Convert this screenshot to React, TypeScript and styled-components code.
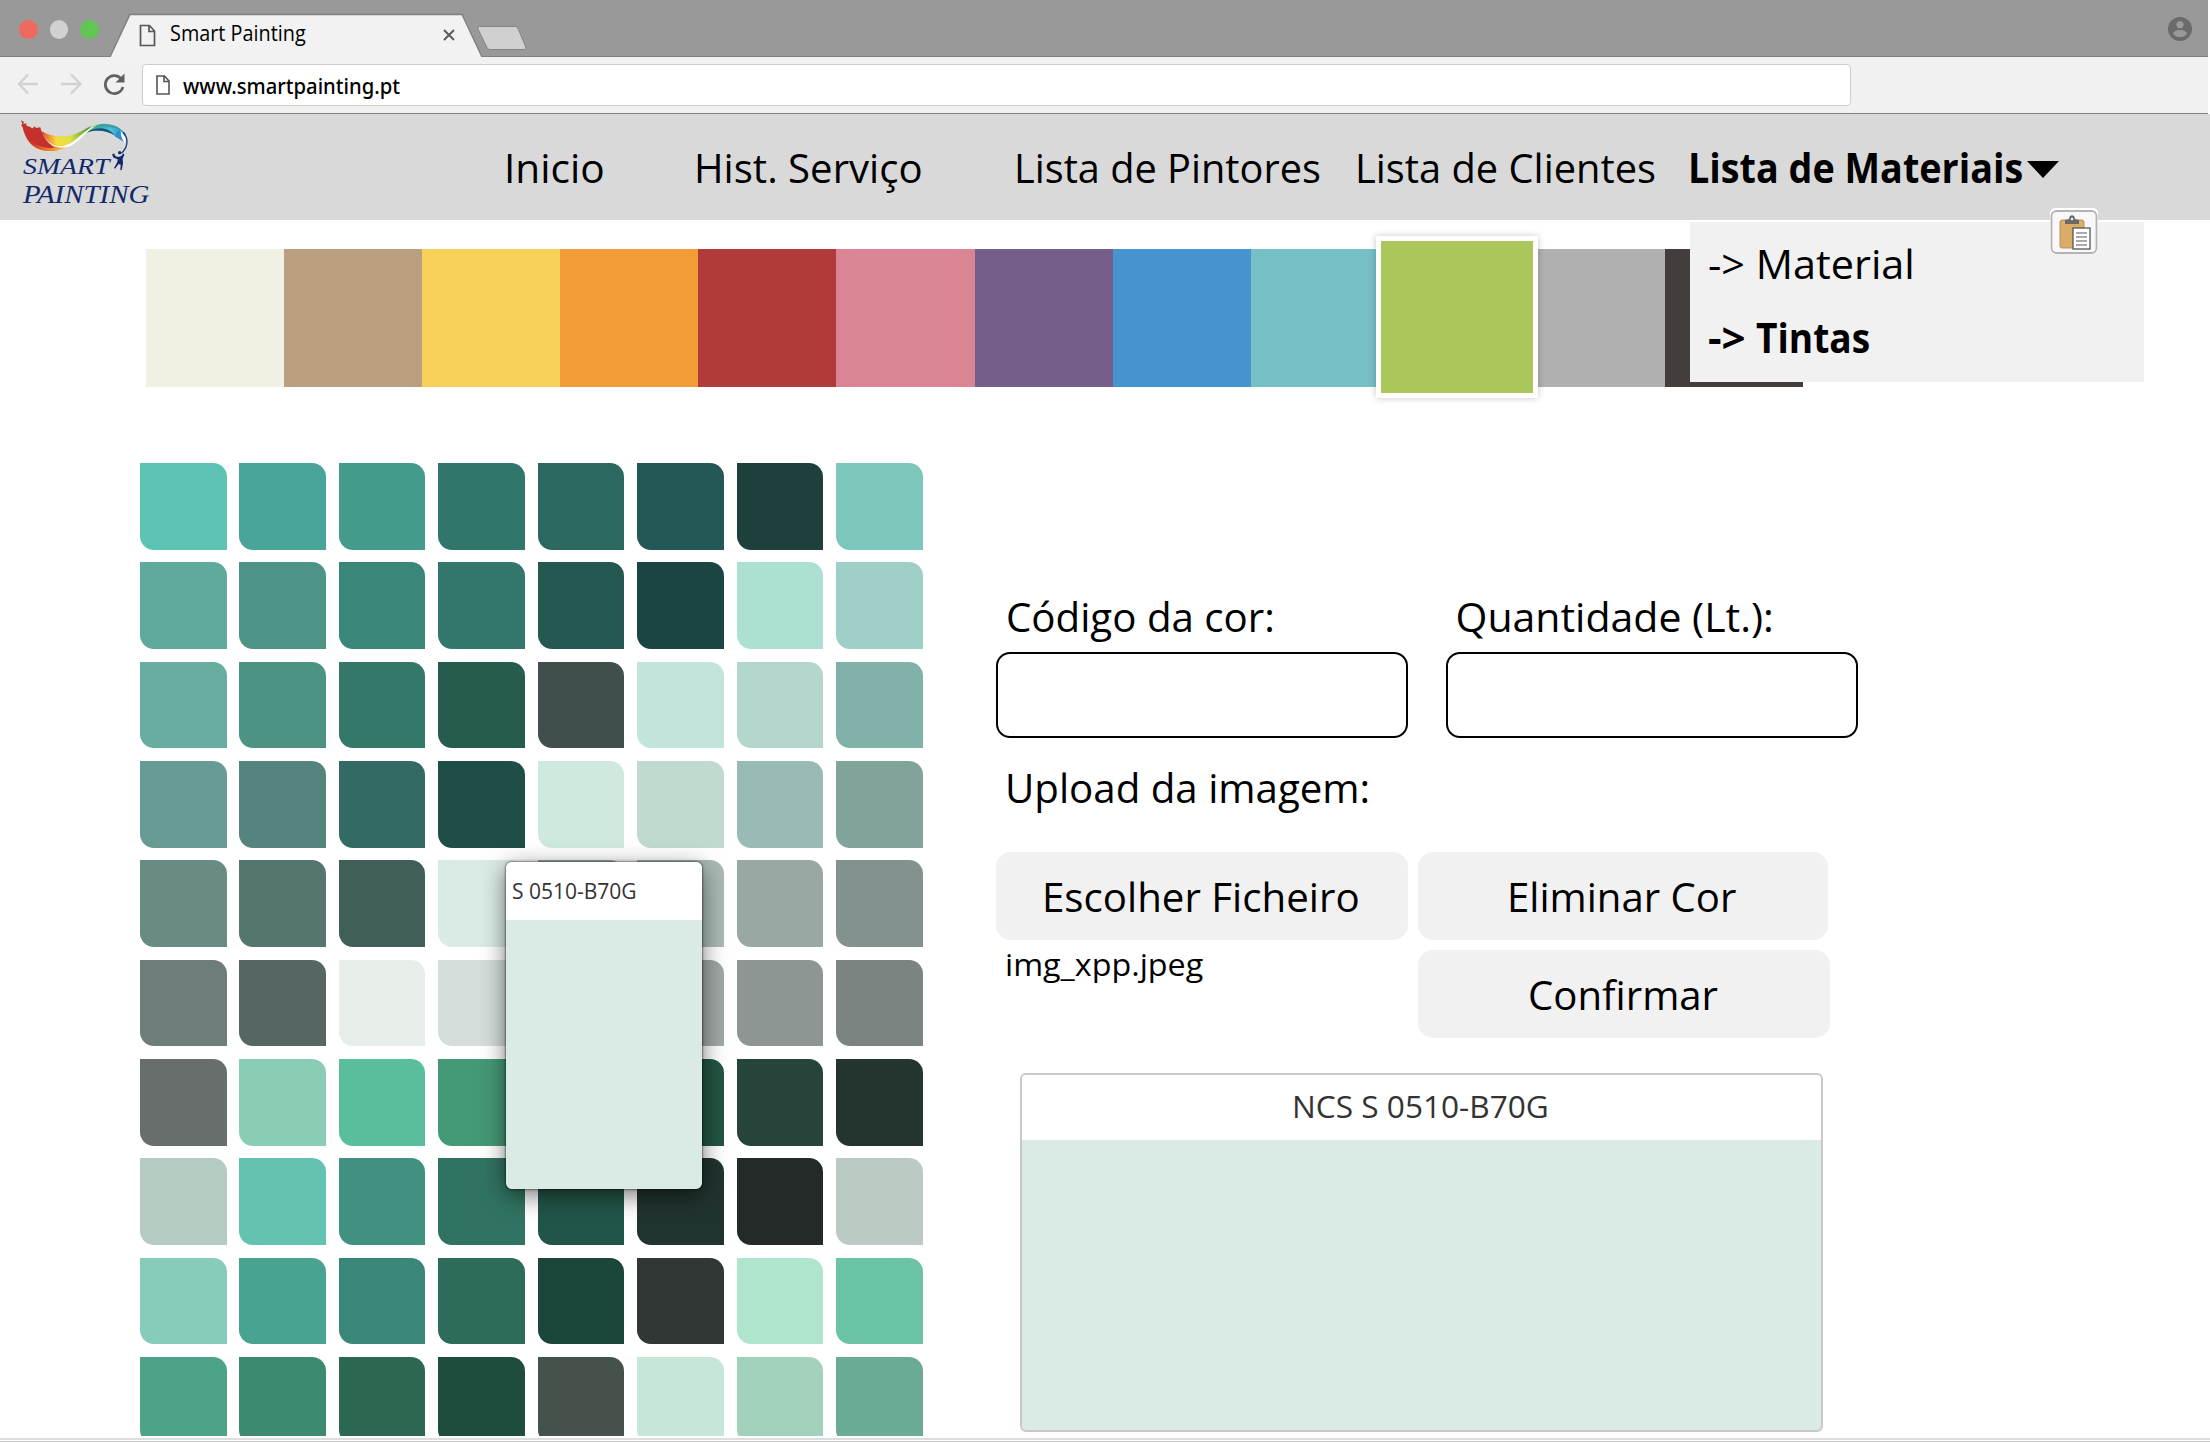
import React, { useLayoutEffect, useRef, useState } from 'react';
import styled, { createGlobalStyle } from 'styled-components';

const Global = createGlobalStyle`
  *, *::before, *::after { box-sizing: border-box; }
  html, body { margin: 0; padding: 0; background: #fff; }
  body { width: 2210px; height: 1442px; overflow: hidden; font-family: 'Open Sans', 'Noto Sans', sans-serif; color: #000; }
`;

const sans = "'Open Sans', 'Noto Sans', sans-serif";

/* Text set to an exact measure: glyphs are condensed to fill the given width. */
const FitBox = styled.span<{ $w: number; $size: number; $lh: number; $weight?: number; $family?: string; $color?: string; $italic?: boolean }>`
  display: block;
  flex: none;
  width: ${p => p.$w}px;
  height: ${p => p.$lh}px;
  line-height: ${p => p.$lh}px;
  font-size: ${p => p.$size}px;
  font-weight: ${p => p.$weight ?? 400};
  font-family: ${p => p.$family ?? sans};
  font-style: ${p => (p.$italic ? 'italic' : 'normal')};
  color: ${p => p.$color ?? '#000'};
  white-space: nowrap;
`;
const FitInner = styled.span`
  display: inline-block;
  transform-origin: 0 50%;
`;

type FitProps = { w: number; size: number; lh: number; weight?: number; family?: string; color?: string; italic?: boolean; children: string };

function Fit({ w, size, lh, weight, family, color, italic, children }: FitProps) {
  const ref = useRef<HTMLSpanElement>(null);
  const [scale, setScale] = useState(1);
  useLayoutEffect(() => {
    if (ref.current && ref.current.offsetWidth) setScale(w / ref.current.offsetWidth);
  }, [w, children]);
  return (
    <FitBox $w={w} $size={size} $lh={lh} $weight={weight} $family={family} $color={color} $italic={italic}>
      <FitInner ref={ref} style={{ transform: `scaleX(${scale})` }}>{children}</FitInner>
    </FitBox>
  );
}

const Page = styled.div`
  display: flex;
  flex-direction: column;
  width: 2210px;
  height: 1442px;
  background: #fff;
  overflow: hidden;
`;

/* ---------- browser chrome ---------- */
const TitleBar = styled.div`
  display: flex;
  align-items: flex-start;
  width: 2208px;
  height: 57px;
  background: #999;
  box-shadow: inset 0 -1px #7f7f7f;
`;
const Lights = styled.div`
  display: flex;
  gap: 12px;
  padding: 20px 0 0 19px;
  width: 110px;
`;
const Light = styled.i<{ $c: string }>`
  width: 18.5px;
  height: 18.5px;
  border-radius: 50%;
  background: ${p => p.$c};
`;
const Tab = styled.div`
  position: relative;
  width: 373px;
  height: 57px;
  display: flex;
  align-items: flex-start;
  padding-left: 29px;
`;
const TabShape = styled.svg`
  position: absolute;
  left: 0;
  top: 0;
`;
const TabDoc = styled.svg`
  position: relative;
  margin-top: 24px;
`;
const TabTitle = styled.div`
  position: relative;
  margin: 18px 0 0 14px;
  width: 273px;
`;
const TabClose = styled.svg`
  position: relative;
  margin-top: 29px;
`;
const NewTab = styled.svg`
  margin: 24px 0 0 -7px;
`;
const Person = styled.svg`
  margin: 17px 16px 0 auto;
`;
const ToolBar = styled.div`
  display: flex;
  align-items: center;
  width: 2208px;
  height: 57px;
  padding-left: 16px;
  background: #f1f1f1;
  border-bottom: 1px solid #808080;
`;
const NavIcons = styled.svg`
  flex: none;
`;
const UrlBar = styled.div`
  display: flex;
  align-items: center;
  width: 1709px;
  height: 42px;
  margin: -1px 0 0 14px;
  padding-left: 13px;
  gap: 13px;
  background: #fff;
  border: 1.5px solid #cdcdcd;
  border-radius: 4px;
`;

/* ---------- site header ---------- */
const Header = styled.header`
  position: relative;
  display: flex;
  align-items: flex-start;
  height: 106px;
  background: #d9d9d9;
`;
const Brand = styled.div`
  width: 504px;
  height: 106px;
  padding: 4px 0 0 18px;
`;
const BrandArt = styled.svg`
  display: block;
  height: 62px;
  margin-bottom: -27px;
`;
const BrandText = styled.div`
  padding-left: 5px;
  display: flex;
  flex-direction: column;
`;
const Nav = styled.nav`
  display: flex;
  align-items: center;
  padding-top: 24.5px;
`;
const NavItem = styled.a<{ $gap: number }>`
  margin-right: ${p => p.$gap}px;
`;
const Caret = styled.i`
  margin-top: 6px;
  border: 16px solid transparent;
  border-top: 17px solid #000;
  border-bottom: 0;
`;
const Menu = styled.div`
  position: absolute;
  z-index: 5;
  left: 1690px;
  top: 108px;
  width: 454px;
  height: 160px;
  padding: 12.5px 0 0 18px;
  background: #f1f1f1;
  display: flex;
  flex-direction: column;
  gap: 18px;
`;
const MenuItem = styled.a`
  display: flex;
  gap: 10px;
`;
const PasteBadge = styled.svg`
  position: absolute;
  z-index: 6;
  left: 2049px;
  top: 94px;
`;

/* ---------- colour families ---------- */
const Strip = styled.div`
  display: flex;
  flex: none;
  margin: 29px 0 0 146px;
  width: 1657px;
  height: 138px;
`;
const Family = styled.div<{ $c: string; $on?: boolean }>`
  flex: 1 1 0;
  min-width: 0;
  background: ${p => p.$c};
  ${p => p.$on && `
    z-index: 1;
    margin: -13px -11px -11px -13px;
    flex: 0 0 162px;
    border: 5px solid #fff;
    box-shadow: 0 0 7px rgba(0,0,0,.22);
  `}
`;

/* ---------- body ---------- */
const Body = styled.main`
  display: flex;
  flex: none;
  align-items: flex-start;
  padding: 76px 0 0 140px;
  height: 1051px;
`;
const Palette = styled.div`
  position: relative;
  flex: none;
  width: 783px;
  height: 973px;
`;
const Swatches = styled.div`
  display: grid;
  grid-template-columns: repeat(8, 86.5px);
  grid-auto-rows: 86.5px;
  gap: 12.85px 12.95px;
  height: 973px;
  overflow: hidden;
`;
const Swatch = styled.div<{ $c: string }>`
  background: ${p => p.$c};
  border-radius: 0 14px 0 14px;
`;
const Popup = styled.div`
  position: absolute;
  left: 366px;
  top: 399px;
  width: 196px;
  height: 327px;
  border-radius: 6px;
  overflow: hidden;
  background: #daebe5;
  box-shadow: 0 0 2px 1px rgba(0,0,0,.4);
`;
const PopupShade = styled.div`
  position: absolute;
  left: 366px;
  top: 399px;
  width: 196px;
  height: 327px;
  border-radius: 6px;
  box-shadow: 0 6px 24px rgba(0,0,0,.55);
`;
const PopupHead = styled.div`
  height: 58px;
  padding: 14px 0 0 6px;
  background: #fff;
`;

const Form = styled.section`
  display: flex;
  flex-direction: column;
  margin: 119px 0 0 73px;
  width: 862px;
`;
const Fields = styled.div`
  display: flex;
  gap: 38px;
`;
const Field = styled.label`
  display: flex;
  flex-direction: column;
  width: 412px;
`;
const Caption = styled.div`
  padding-left: 9.5px;
  height: 70px;
  padding-top: 6px;
`;
const Input = styled.input`
  width: 412px;
  height: 86px;
  border: 2px solid #000;
  border-radius: 14px;
  background: #fff;
  outline: none;
`;
const UploadCaption = styled.div`
  padding: 21px 0 0 9px;
  height: 114px;
`;
const Actions = styled.div`
  display: grid;
  grid-template-columns: 412px 412px;
  grid-template-rows: 88px 88px;
  gap: 10px;
`;
const Button = styled.button<{ $w: number }>`
  display: flex;
  justify-content: center;
  align-items: center;
  width: ${p => p.$w}px;
  height: 88px;
  padding: 0 3px 1px 0;
  border: 0;
  border-radius: 15px;
  background: #f1f1f1;
`;
const FileName = styled.div`
  padding-left: 9px;
  margin-top: -1.5px;
`;
const Card = styled.div`
  width: 803px;
  height: 359px;
  margin: 35px 0 0 24px;
  border: 2px solid #c8c8c8;
  border-radius: 6px;
  background: #daebe5;
  overflow: hidden;
`;
const CardHead = styled.div`
  display: flex;
  justify-content: center;
  height: 65px;
  padding: 9px 2px 0 0;
  background: #fff;
`;
const Foot = styled.div`
  flex: none;
  height: 4px;
  background: linear-gradient(#dedede 0 2px, #fff 2px 3px, #c4c4c4 3px 4px);
`;

const families = ['#f0f1e3', '#ba9f81', '#f8d15b', '#f29c38', '#b13a3a', '#da8593', '#755e8a', '#4693ce', '#76c0c5', '#abc65b', '#b0b0b0', '#433e3c'];

const shades = [
  '#5dc3b5', '#49a499', '#449a8b', '#31766a', '#2b685f', '#245856', '#1d403d', '#7dc6bc',
  '#5faa9d', '#4d9386', '#3a8679', '#33766c', '#255850', '#1b4542', '#abe0d3', '#9fd0c8',
  '#68ad9f', '#4c9384', '#337869', '#255c4e', '#404e4d', '#c1e5dc', '#b3d6cd', '#80b2aa',
  '#689b94', '#53857e', '#346a64', '#1f4e47', '#cee9dd', '#c0dad0', '#98bcb5', '#80a39c',
  '#688c84', '#55756f', '#405f59', '#daebe5', '#9fb0ac', '#abbab6', '#9aa8a4', '#83928e',
  '#6e7d79', '#566662', '#e7eeea', '#d5deda', '#b4bfbb', '#a0a8a5', '#8e9693', '#7c8482',
  '#686e6b', '#8bcdb4', '#5abe9c', '#449976', '#2f7a5a', '#235643', '#27443a', '#24342f',
  '#b4cbc2', '#64c3b0', '#40917f', '#317362', '#225549', '#213330', '#232a28', '#bbcbc4',
  '#87ccba', '#48a491', '#3a8678', '#2d6c5b', '#1c463b', '#303735', '#b0e5cd', '#6bc3a5',
  '#4da38a', '#3c8b71', '#2c6851', '#1e4d3d', '#45514b', '#c6e6d7', '#a2d2bb', '#69ab95',
];

const script = "'Z003', 'URW Chancery L', 'Liberation Serif', serif";

function Logo() {
  return (
    <Brand>
      <BrandArt width="116" height="62" viewBox="54 24 348 186">
        <defs>
          <linearGradient id="ribbon" x1="63" y1="0" x2="382" y2="0" gradientUnits="userSpaceOnUse">
            <stop offset="0" stopColor="#c4302b" />
            <stop offset=".12" stopColor="#cf3a28" />
            <stop offset=".24" stopColor="#ea7a2a" />
            <stop offset=".38" stopColor="#f2b535" />
            <stop offset=".5" stopColor="#d8d544" />
            <stop offset=".6" stopColor="#7fb843" />
            <stop offset=".72" stopColor="#3fae8c" />
            <stop offset=".84" stopColor="#4fbfd4" />
            <stop offset="1" stopColor="#2a86cc" />
          </linearGradient>
          <linearGradient id="inner" x1="130" y1="0" x2="265" y2="0" gradientUnits="userSpaceOnUse">
            <stop offset="0" stopColor="#e8622b" />
            <stop offset=".3" stopColor="#f6dd3f" />
            <stop offset=".6" stopColor="#dfe04a" />
            <stop offset="1" stopColor="#4f9c3c" />
          </linearGradient>
        </defs>
        <path d="M66 44C74 82 92 123 150 123C214 123 232 76 278 62C310 54 332 64 346 80C360 80 366 84 370 94L378 78C366 50 336 40 308 41C270 44 244 78 186 80C158 80 140 72 128 66z" fill="url(#ribbon)" />
        <path d="M128 66C150 78 172 81 196 79C232 75 250 58 274 48C250 72 226 106 184 107C158 107 140 92 128 66z" fill="url(#inner)" />
        <path d="M63 31L72 36L70 42L79 40L80 48L90 50L97 56L104 49L108 54L121 52L124 64L130 68C138 92 152 106 164 114C104 118 78 82 70 52L63 46L67 42z" fill="#c4302b" />
        <path d="M126 66C142 104 176 120 214 98C240 82 252 60 290 46C256 66 246 88 218 104C180 124 140 108 126 66z" fill="#fff" />
        <path d="M262 66C290 48 326 52 344 76C322 62 294 58 262 66z" fill="#12557f" />
        <path d="M300 42C330 40 356 48 370 66C348 52 326 50 300 50z" fill="#3d9fae" />
        <path d="M362 62L378 84L374 100C366 92 362 78 362 62z" fill="#fff" />
        <path d="M360 60C350 64 344 72 346 80L372 96C364 84 361 72 360 60z" fill="#2f8fd2" />
        <path d="M370 66C388 90 382 114 364 130" fill="none" stroke="#1b3f7c" strokeWidth="4" />
        <circle cx="359" cy="128" r="5" fill="#12296a" />
        <path d="M336 134L342 130L346 138L354 141L364 138L370 130L373 134L368 146L369 160L365 181L361 180L362 164L356 162L345 176L342 174L352 156L353 148L341 143z" fill="#12296a" />
      </BrandArt>
      <BrandText>
        <Fit w={87} size={23} lh={28} family={script} italic color="#12296a">SMART</Fit>
        <Fit w={126} size={25} lh={28} family={script} italic color="#12296a">PAINTING</Fit>
      </BrandText>
    </Brand>
  );
}

export default function App() {
  return (
    <Page>
      <Global />
      <TitleBar>
        <Lights>
          <Light $c="#ee6a5e" />
          <Light $c="#d1d1d1" />
          <Light $c="#61c654" />
        </Lights>
        <Tab>
          <TabShape width="373" height="57">
            <path d="M0 57L20 14.500H352L372 57" fill="#f2f2f2" stroke="#7f7f7f" strokeWidth="1.300" />
          </TabShape>
          <TabDoc width="17" height="23" fill="none" stroke="#565656" strokeWidth="1.700">
            <path d="M1.500 1.500h9l5 5.500v14.500h-14zM10 1.500v6h5.500" />
          </TabDoc>
          <TabTitle><Fit w={136} size={21} lh={31}>Smart Painting</Fit></TabTitle>
          <TabClose width="13" height="13" stroke="#5c5c5c" strokeWidth="2">
            <path d="M1 1l10 10M11 1L1 11" />
          </TabClose>
        </Tab>
        <NewTab width="52" height="28">
          <path d="M3.500 2.500H39q2 0 3 2l7.500 18q1 3-1 3H14q-2 0-3-2L2 5q-1-2.500 1.500-2.500z" fill="#d0d0d0" stroke="#848484" />
        </NewTab>
        <Person width="24" height="24" viewBox="0 0 24 24">
          <circle cx="12" cy="12" r="12" fill="#6b6b6b" />
          <circle cx="12" cy="7.600" r="3.600" fill="#999" />
          <path d="M5 16.200c2-4.400 12-4.400 14 0-2.500 5.200-11.500 5.200-14 0z" fill="#999" />
        </Person>
      </TitleBar>
      <ToolBar>
        <NavIcons width="112" height="30" fill="none" strokeWidth="2.400">
          <path d="M22 14H3.500M12 4.500L3 14l9 9.500M45 14h18.500M55 4.500l9.500 9.500-9.500 9.500" stroke="#d2d2d2" />
          <path d="M105 8.500a9 9 0 1 0 2 8.500" stroke="#606060" strokeWidth="2.700" />
          <path d="M108.500 3.500v9h-9z" fill="#606060" />
        </NavIcons>
        <UrlBar>
          <svg width="14" height="20" fill="none" stroke="#565656" strokeWidth="1.600"><path d="M1 1h7.500l4.500 5v13H1zM8 1v5.500h5" /></svg>
          <Fit w={217} size={22} lh={30} weight={500} family="'Noto Sans', sans-serif">www.smartpainting.pt</Fit>
        </UrlBar>
      </ToolBar>
      <Header>
        <Logo />
        <Nav>
          <NavItem $gap={89}><Fit w={101} size={41} lh={56}>Inicio</Fit></NavItem>
          <NavItem $gap={91}><Fit w={229} size={41} lh={56}>Hist. Serviço</Fit></NavItem>
          <NavItem $gap={34}><Fit w={307} size={41} lh={56}>Lista de Pintores</Fit></NavItem>
          <NavItem $gap={32}><Fit w={301} size={41} lh={56}>Lista de Clientes</Fit></NavItem>
          <NavItem $gap={4}><Fit w={335} size={41} lh={56} weight={700}>Lista de Materiais</Fit></NavItem>
          <Caret />
        </Nav>
        <Menu>
          <MenuItem><Fit w={207} size={41} lh={56}>{'-> Material'}</Fit></MenuItem>
          <MenuItem>
            <Fit w={38} size={41} lh={56} weight={700}>{'->'}</Fit>
            <Fit w={114} size={41} lh={56} weight={700}>Tintas</Fit>
          </MenuItem>
        </Menu>
        <PasteBadge width="50" height="48">
          <rect x="1" y="0" width="48" height="46" rx="5" fill="#fff" />
          <rect x="2.500" y="3" width="45" height="42" rx="5" fill="#f8f8f8" stroke="#b3b3b3" strokeWidth="1.800" />
          <rect x="11" y="12" width="24" height="28" rx="2" fill="#d9ac69" stroke="#bd9150" />
          <path d="M16 16v-4l4-1c0-5 6-5 6 0l4 1v4z" fill="#696969" />
          <circle cx="23" cy="11" r="1.300" fill="#eee" />
          <rect x="24" y="20" width="17" height="21" fill="#fff" stroke="#555" strokeWidth="1.300" />
          <path d="M27 25h11M27 29h11M27 33h11M27 37h11" stroke="#aaa" strokeWidth="1.800" />
        </PasteBadge>
      </Header>
      <Strip>
        {families.map((c, i) => <Family key={c} $c={c} $on={i === 9} />)}
      </Strip>
      <Body>
        <Palette>
          <Swatches>
            {shades.map((c, i) => <Swatch key={i} $c={c} />)}
          </Swatches>
          <PopupShade />
          <Popup>
            <PopupHead><Fit w={125} size={21} lh={31} color="#333">S 0510-B70G</Fit></PopupHead>
          </Popup>
        </Palette>
        <Form>
          <Fields>
            <Field>
              <Caption><Fit w={269} size={41} lh={56}>Código da cor:</Fit></Caption>
              <Input />
            </Field>
            <Field>
              <Caption><Fit w={318} size={41} lh={56}>Quantidade (Lt.):</Fit></Caption>
              <Input />
            </Field>
          </Fields>
          <UploadCaption><Fit w={365} size={41} lh={56}>Upload da imagem:</Fit></UploadCaption>
          <Actions>
            <Button $w={412}><Fit w={318} size={41} lh={56}>Escolher Ficheiro</Fit></Button>
            <Button $w={410}><Fit w={229} size={41} lh={56}>Eliminar Cor</Fit></Button>
            <FileName><Fit w={198} size={31} lh={30}>img_xpp.jpeg</Fit></FileName>
            <Button $w={412}><Fit w={190} size={41} lh={56}>Confirmar</Fit></Button>
          </Actions>
          <Card>
            <CardHead><Fit w={257} size={31} lh={44} color="#333">NCS S 0510-B70G</Fit></CardHead>
          </Card>
        </Form>
      </Body>
      <Foot />
    </Page>
  );
}
